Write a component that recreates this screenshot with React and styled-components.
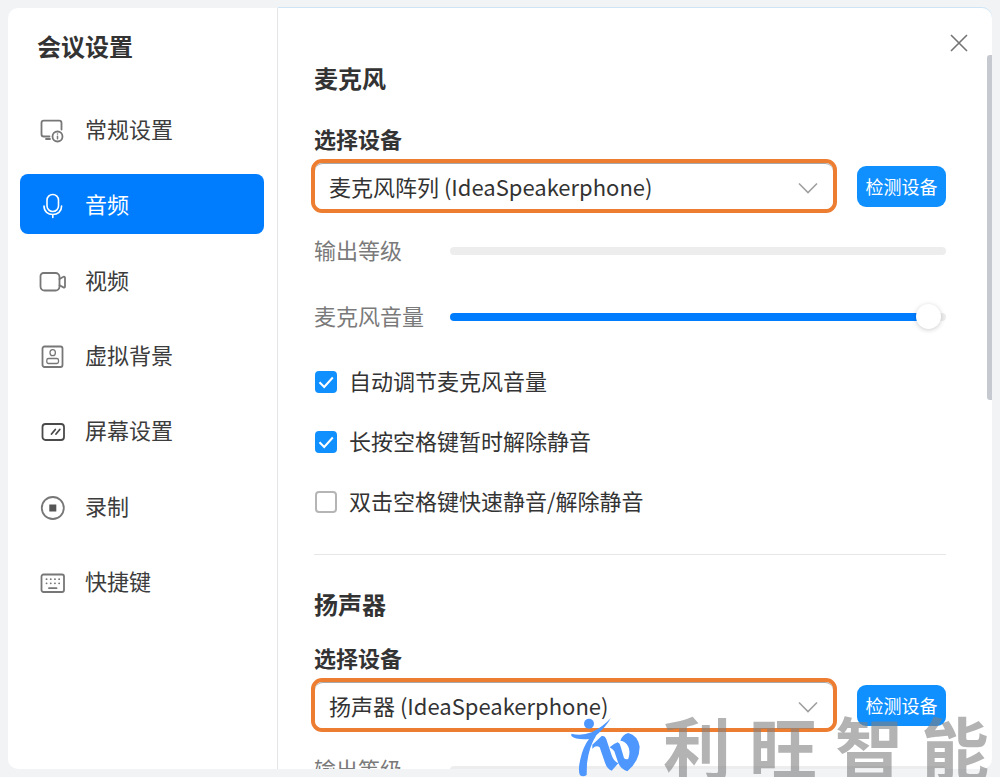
import React, { useState } from "react";
import styled, { createGlobalStyle, css } from "styled-components";

const GlobalStyle = createGlobalStyle`
  *, *::before, *::after { box-sizing: border-box; }
  body {
    margin: 0;
    overflow: hidden;
    background: #f1f3f5;
    color: #333;
    font-family: "Noto Sans CJK SC", "Noto Sans", sans-serif;
    font-size: 22px;
    line-height: 30px;
  }
  button, input, select { font: inherit; color: inherit; margin: 0; }
  h1, h2, h3, ul { margin: 0; padding: 0; }
`;

const Screen = styled.div`
  height: 100vh;
  padding: 8px;
  overflow: hidden;
`;

const Dialog = styled.div`
  display: grid;
  grid-template-columns: 270px minmax(0, 1fr);
  height: 100%;
`;

const Sidebar = styled.aside`
  background: #fff;
  border-right: 1px solid #e3e6e9;
  border-radius: 10px 0 0 10px;
  padding: 22px 13px 0 12px;
`;

const Heading = styled.h1`
  padding-left: 17px;
  font-size: 24px;
  line-height: 32px;
  font-weight: 700;
`;

const NavList = styled.ul`
  display: grid;
  grid-auto-rows: 1fr;
  gap: 16px;
  height: 512px;
  margin-top: 37px;
  list-style: none;
`;

const NavItem = styled.button`
  display: flex;
  align-items: center;
  gap: 18px;
  width: 100%;
  height: 100%;
  padding: 0 0 0 19px;
  border: 0;
  border-radius: 8px;
  background: ${(p) => (p.$active ? "#007dff" : "transparent")};
  color: ${(p) => (p.$active ? "#fff" : "#3c3c3c")};
  text-align: left;
  cursor: pointer;
  svg {
    flex: none;
    margin-top: 4px;
    color: ${(p) => (p.$active ? "#fff" : "#777")};
  }
`;

const NavText = styled.span`
  padding-bottom: 2px;
`;

const Main = styled.main`
  position: relative;
  overflow: hidden;
  background: #fff;
  border-radius: 0 10px 10px 0;
  box-shadow: 0 -1px 0 #cde4f6;
  padding: 54px 46px 0 36px;
`;

const CloseButton = styled.button`
  position: absolute;
  top: 24px;
  right: 22px;
  display: flex;
  padding: 0;
  border: 0;
  background: none;
  color: #737373;
  cursor: pointer;
`;

const ScrollThumb = styled.div`
  position: absolute;
  top: 47px;
  right: 0;
  width: 5px;
  height: 345px;
  border-radius: 3px 0 0 3px;
  background: #c6c9d0;
`;

const Section = styled.section`
  & + & {
    margin-top: 35px;
    padding-top: 33px;
    border-top: 1px solid #e4e6e8;
  }
`;

const SectionTitle = styled.h2`
  font-size: 24px;
  line-height: 32px;
  font-weight: 700;
`;

const FieldLabel = styled.label`
  display: block;
  margin-top: ${(p) => (p.$roomy ? 29 : 22)}px;
  font-weight: 700;
`;

const DeviceRow = styled.div`
  display: grid;
  grid-template-columns: minmax(0, 1fr) 89px;
  align-items: center;
  gap: 20px;
  margin: 6px 0 21px -3px;
`;

const SelectFrame = styled.div`
  display: grid;
  align-items: center;
  height: 54px;
  border: 4px solid #ed7d31;
  border-radius: 11px;
  > * { grid-area: 1 / 1; }
  > svg {
    justify-self: end;
    margin: 4px 15px 0 0;
    color: #a0a0a0;
    pointer-events: none;
  }
`;

const Select = styled.select`
  appearance: none;
  width: 100%;
  height: 46px;
  padding: 0 48px 2px 14px;
  border: 0;
  border-top: 1px solid #a8a8a8;
  border-radius: 8px;
  background: #fff;
  outline: none;
`;

const TestButton = styled.button`
  height: 41px;
  padding: 0;
  border: 0;
  border-radius: 9px;
  background: #1090ff;
  color: #fff;
  font-size: 18px;
  line-height: 24px;
  white-space: nowrap;
  cursor: pointer;
`;

const MeterRow = styled.div`
  display: grid;
  grid-template-columns: 136px minmax(0, 1fr);
  align-items: center;
  color: #7a7a7a;
  & + & { margin-top: 32px; }
  > :first-child { padding-bottom: 4px; }
`;

const LevelTrack = styled.div`
  height: 8px;
  border-radius: 4px;
  background: #ededed;
`;

const thumb = css`
  width: 25px;
  height: 25px;
  margin-top: -9px;
  border: 0;
  border-radius: 50%;
  background: #fff;
  box-shadow: 0 1px 5px rgba(0, 0, 0, 0.2);
`;

const Slider = styled.input`
  appearance: none;
  width: 100%;
  height: 26px;
  background: none;
  &::-webkit-slider-runnable-track {
    height: 8px;
    border-radius: 4px;
    background: linear-gradient(to right, #007dff var(--fill), #ededed var(--fill));
  }
  &::-webkit-slider-thumb { appearance: none; ${thumb} }
`;

const CheckList = styled.div`
  display: grid;
  gap: 26px;
  margin-top: 31px;
`;

const CheckRow = styled.label`
  display: flex;
  align-items: center;
  gap: 12px;
  padding-left: 1px;
`;

const CheckText = styled.span`
  padding-bottom: 4px;
`;

const CheckBox = styled.span`
  display: grid;
  width: 22px;
  height: 22px;
  > * { grid-area: 1 / 1; }
  svg { pointer-events: none; color: #fff; }
`;

const CheckInput = styled.input`
  appearance: none;
  width: 22px;
  height: 22px;
  border: 2px solid #b5b5b5;
  border-radius: 4px;
  background: #fff;
  &:checked { border-color: #1090ff; background: #1090ff; }
`;

const Watermark = styled.div`
  position: fixed;
  right: 11px;
  bottom: -19px;
  display: flex;
  align-items: flex-start;
  gap: 20px;
  height: 80px;
  pointer-events: none;
`;

const WatermarkName = styled.div`
  display: flex;
  gap: 18px;
  color: rgba(128, 128, 128, 0.6);
  font-size: 68px;
  line-height: 60px;
  font-weight: 700;
`;

function Icon({ children, size = 28 }) {
  return (
    <svg width={size} height={size} viewBox={`0 0 ${size} ${size}`} fill="none" stroke="currentColor"
      strokeWidth="1.8" strokeLinecap="round" strokeLinejoin="round" aria-hidden="true">
      {children}
    </svg>
  );
}

const icons = {
  general: (
    <Icon>
      <path d="M10.5 19.5H4.800a2.300 2.300 0 0 1-2.300-2.300V6a2.300 2.300 0 0 1 2.300-2.300h15.400A2.300 2.300 0 0 1 22.500 6v6.500M7 22h4" />
      <circle cx="18.500" cy="19.500" r="5" />
      <path d="M18.500 19.300v2.500M18.500 16.900v.1" strokeWidth="1.500" />
    </Icon>
  ),
  audio: (
    <Icon>
      <rect x="8" y="2.500" width="11.500" height="17" rx="5.700" strokeWidth="1.600" />
      <path d="M5 14c0 5.500 4 8.500 8.800 8.500s8.800-3 8.800-8.500M13.800 22.500v3" strokeWidth="1.600" />
    </Icon>
  ),
  video: (
    <Icon>
      <path d="M4.500 5h12a4 4 0 0 1 4 4v9.500a4 4 0 0 1-4 4H5.500a4 4 0 0 1-4-4V8a3 3 0 0 1 3-3" />
      <path d="M20.500 11l4-2.200a1 1 0 0 1 1.500.8v9a1 1 0 0 1-1.500.8l-4-2.200" />
    </Icon>
  ),
  background: (
    <Icon>
      <rect x="3.500" y="3.500" width="20" height="20.500" rx="2" />
      <ellipse cx="13.700" cy="9.700" rx="2.700" ry="3" strokeWidth="1.300" />
      <rect x="7.800" y="15.500" width="11.700" height="5" rx="1.700" strokeWidth="1.300" />
    </Icon>
  ),
  screen: (
    <Icon>
      <g stroke="#4a4a4a">
        <rect x="3.500" y="6" width="21.500" height="16" rx="3" />
        <path d="M12.500 16l3.800-4.500M17 16l3.800-4.500" />
      </g>
    </Icon>
  ),
  record: (
    <Icon>
      <circle cx="13.800" cy="14" r="11" />
      <rect x="10.300" y="10.500" width="7" height="7" fill="#555" stroke="none" />
    </Icon>
  ),
  keyboard: (
    <Icon>
      <rect x="2.500" y="5.500" width="22.500" height="17.500" rx="2" />
      <path d="M7.500 10.200h.1M11.700 10.200h.1M15.900 10.200h.1M20.100 10.200h.1M7.500 14.300h.1M11.700 14.300h.1M15.900 14.300h.1M20.100 14.300h.1M10 19.200h7.500" />
    </Icon>
  ),
};

const navItems = [
  ["general", "常规设置"],
  ["audio", "音频"],
  ["video", "视频"],
  ["background", "虚拟背景"],
  ["screen", "屏幕设置"],
  ["record", "录制"],
  ["keyboard", "快捷键"],
];

function DevicePicker({ id, device, roomy }) {
  return (
    <>
      <FieldLabel htmlFor={id} $roomy={roomy}>选择设备</FieldLabel>
      <DeviceRow>
        <SelectFrame>
          <Select id={id}><option>{device}</option></Select>
          <svg width="20" height="12" viewBox="0 0 20 12" fill="none" stroke="currentColor" strokeWidth="1.6" aria-hidden="true">
            <path d="M1 1.500l9 9 9-9" />
          </svg>
        </SelectFrame>
        <TestButton type="button">检测设备</TestButton>
      </DeviceRow>
      <MeterRow>
        <span>输出等级</span>
        <LevelTrack />
      </MeterRow>
    </>
  );
}

function Check({ label, initial }) {
  const [on, setOn] = useState(initial);
  return (
    <CheckRow>
      <CheckBox>
        <CheckInput type="checkbox" checked={on} onChange={(e) => setOn(e.target.checked)} />
        {on && (
          <svg width="22" height="22" viewBox="0 0 22 22" fill="none" stroke="currentColor" strokeWidth="2" aria-hidden="true">
            <path d="M4.500 11.300l4.700 4.700 8.600-9.500" />
          </svg>
        )}
      </CheckBox>
      <CheckText>{label}</CheckText>
    </CheckRow>
  );
}

export default function App() {
  const [active, setActive] = useState("audio");
  const [volume, setVolume] = useState(99);
  return (
    <Screen>
      <GlobalStyle />
      <Dialog>
        <Sidebar>
          <Heading>会议设置</Heading>
          <nav>
            <NavList>
              {navItems.map(([key, label]) => (
                <li key={key}>
                  <NavItem type="button" $active={key === active} onClick={() => setActive(key)}>
                    {icons[key]}
                    <NavText>{label}</NavText>
                  </NavItem>
                </li>
              ))}
            </NavList>
          </nav>
        </Sidebar>
        <Main>
          <Section>
            <SectionTitle>麦克风</SectionTitle>
            <DevicePicker id="mic" device="麦克风阵列 (IdeaSpeakerphone)" roomy />
            <MeterRow>
              <label htmlFor="mic-volume">麦克风音量</label>
              <Slider id="mic-volume" type="range" value={volume} style={{ "--fill": `${volume - 2}%` }}
                onChange={(e) => setVolume(Number(e.target.value))} />
            </MeterRow>
            <CheckList>
              <Check label="自动调节麦克风音量" initial />
              <Check label="长按空格键暂时解除静音" initial />
              <Check label="双击空格键快速静音/解除静音" initial={false} />
            </CheckList>
          </Section>
          <Section>
            <SectionTitle>扬声器</SectionTitle>
            <DevicePicker id="speaker" device="扬声器 (IdeaSpeakerphone)" />
          </Section>
          <CloseButton type="button" aria-label="关闭">
            <svg width="22" height="22" viewBox="0 0 22 22" fill="none" stroke="currentColor" strokeWidth="1.6" aria-hidden="true">
              <path d="M3 3l16 16M19 3L3 19" />
            </svg>
          </CloseButton>
          <ScrollThumb />
        </Main>
      </Dialog>
      <Watermark>
        <svg width="74" height="61" viewBox="24 48 222 183" fill="#4d97ff" aria-hidden="true">
          <circle cx="84" cy="71" r="15" />
          <path d="M31 101Q60 109 92 97Q125 81 150 54Q132 84 106 106Q84 140 78 190L77 225Q67 232 57 226Q50 211 58 178Q66 140 84 117Q45 120 31 108Z" />
          <path d="M94 134L122 108Q132 106 136 118L152 166Q158 184 172 190L152 212Q138 206 132 188L116 142Q106 134 94 146Z" />
          <path d="M146 142Q156 132 170 127Q177 130 179 140L189 174Q194 180 202 176Q209 155 202 140Q194 123 178 122Q184 104 202 99Q230 106 236 140Q236 182 199 214Q180 208 172 190L160 154Q154 146 146 142Z" />
        </svg>
        <WatermarkName>
          <span>利</span><span>旺</span><span>智</span><span>能</span>
        </WatermarkName>
      </Watermark>
    </Screen>
  );
}
